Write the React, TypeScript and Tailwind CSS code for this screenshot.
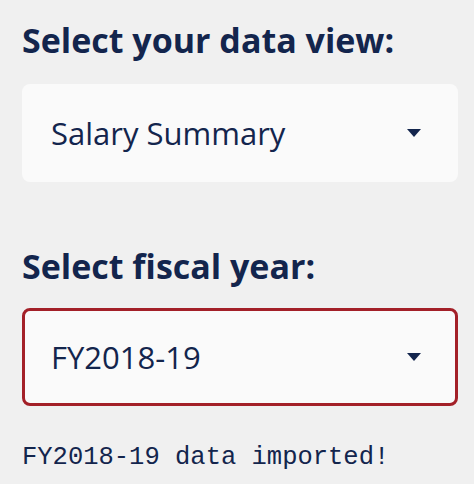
import React from "react";

const sans = { fontFamily: '"Open Sans", "Noto Sans", sans-serif' };
const mono = { fontFamily: '"Liberation Mono", "DejaVu Sans Mono", monospace' };

function Caret() {
	return (
		<svg width="14" height="8" viewBox="0 0 14 8" className="shrink-0">
			<path d="M0 0 H14 L7 8 Z" fill="#13254d" />
		</svg>
	);
}

function SelectBox({ value, active }: { value: string; active?: boolean }) {
	return (
		<div
			className={
				active
					? "flex h-[98px] items-center justify-between rounded-[8px] border-[3px] border-[#a32028] bg-[#fafafa] pl-[26px] pr-[34px]"
					: "flex h-[98px] items-center justify-between rounded-[8px] bg-[#fafafa] pl-[29px] pr-[37px]"
			}
		>
			<span className="text-[31px] text-[#13254d]" style={sans}>
				{value}
			</span>
			<Caret />
		</div>
	);
}

export default function App() {
	return (
		<main className="min-h-[484px] w-[474px] bg-[#f0f0f0] pl-[22px] pr-[16px] pt-[20px]">
			<h2
				className="text-[34px] font-bold leading-[40px] text-[#13254d]"
				style={sans}
			>
				Select your data view:
			</h2>
			<div className="mt-[24px]">
				<SelectBox value="Salary Summary" />
			</div>

			<h2
				className="mt-[64px] text-[34px] font-bold leading-[40px] text-[#13254d]"
				style={sans}
			>
				Select fiscal year:
			</h2>
			<div className="mt-[22px]">
				<SelectBox value="FY2018-19" active />
			</div>

			<p
				className="mt-[36px] text-[25.5px] leading-[32px] text-[#13254d]"
				style={mono}
			>
				FY2018-19 data imported!
			</p>
		</main>
	);
}
